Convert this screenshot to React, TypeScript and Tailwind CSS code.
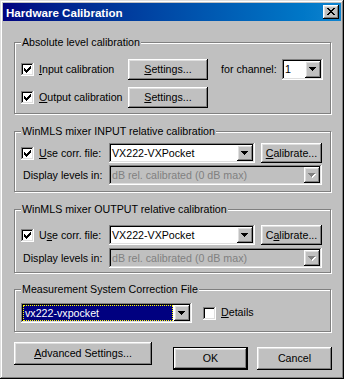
import React from 'react';

const F = "font-['Liberation_Sans',Arial,sans-serif]";
const RAISED =
  "bg-[#c0c0c0] shadow-[inset_-1px_-1px_0_#000,inset_1px_1px_0_#fff,inset_-2px_-2px_0_#808080,inset_2px_2px_0_#dfdfdf]";
const DEFAULT_BTN =
  "bg-[#c0c0c0] shadow-[inset_-1px_-1px_0_#000,inset_1px_1px_0_#000,inset_-2px_-2px_0_#000,inset_2px_2px_0_#fff,inset_-3px_-3px_0_#808080,inset_3px_3px_0_#dfdfdf]";
const SUNKEN =
  "shadow-[inset_-1px_-1px_0_#fff,inset_1px_1px_0_#808080,inset_-2px_-2px_0_#dfdfdf,inset_2px_2px_0_#000]";

type Layer = { rows: string[]; color: string; dx?: number; dy?: number };

function Pix({ w, h, layers }: { w: number; h: number; layers: Layer[] }) {
  const rects: React.ReactElement[] = [];
  layers.forEach((l, i) => {
    l.rows.forEach((r, y) => {
      r.split('').forEach((c, x) => {
        if (c === '#') {
          rects.push(
            <rect
              key={`${i}-${x}-${y}`}
              x={x + (l.dx ?? 0)}
              y={y + (l.dy ?? 0)}
              width="1"
              height="1"
              fill={l.color}
            />
          );
        }
      });
    });
  });
  return (
    <svg width={w} height={h} viewBox={`0 0 ${w} ${h}`} shapeRendering="crispEdges" className="block">
      {rects}
    </svg>
  );
}

const CHECK = ['......#', '.....##', '#...###', '##.###.', '#####..', '.###...', '..#....'];
const ARROW = ['#######', '.#####.', '..###..', '...#...'];
const XG = ['##....##', '.##..##.', '..####..', '...##...', '..####..', '.##..##.', '##....##'];

function U({ children }: { children: React.ReactNode }) {
  return <span className="underline decoration-1 underline-offset-[1px]">{children}</span>;
}

function Check({ checked, className = '' }: { checked?: boolean; className?: string }) {
  return (
    <div className={`w-[13px] h-[13px] shrink-0 bg-white ${SUNKEN} pl-[3px] pt-[3px] ${className}`}>
      {checked && <Pix w={7} h={7} layers={[{ rows: CHECK, color: '#000' }]} />}
    </div>
  );
}

function DropBtn({ disabled }: { disabled?: boolean }) {
  return (
    <div className={`w-[16px] h-full shrink-0 ${RAISED} pl-[4px] pt-[6px]`}>
      {disabled ? (
        <Pix
          w={8}
          h={5}
          layers={[
            { rows: ARROW, color: '#fff', dx: 1, dy: 1 },
            { rows: ARROW, color: '#808080' },
          ]}
        />
      ) : (
        <Pix w={7} h={4} layers={[{ rows: ARROW, color: '#000' }]} />
      )}
    </div>
  );
}

function Combo({
  className,
  text,
  disabled,
  selected,
}: {
  className: string;
  text: string;
  disabled?: boolean;
  selected?: boolean;
}) {
  return (
    <div className={`flex shrink-0 p-[2px] ${SUNKEN} ${disabled ? 'bg-[#c0c0c0]' : 'bg-white'} ${className}`}>
      {selected ? (
        <div className="flex-1 min-w-0 mr-[1px] flex items-center pl-[2px] bg-[#000080] text-white outline-1 outline-dotted outline-[#ffff00] -outline-offset-1 whitespace-nowrap overflow-hidden">
          {text}
        </div>
      ) : (
        <div
          className={`flex-1 min-w-0 flex items-center pl-[1px] whitespace-nowrap overflow-hidden ${
            disabled ? 'text-[#808080]' : 'text-black'
          }`}
        >
          {text}
        </div>
      )}
      <DropBtn disabled={disabled} />
    </div>
  );
}

function Btn({
  className,
  children,
  def,
}: {
  className: string;
  children: React.ReactNode;
  def?: boolean;
}) {
  return (
    <div className={`flex shrink-0 items-center justify-center whitespace-nowrap ${def ? DEFAULT_BTN : RAISED} ${className}`}>
      {children}
    </div>
  );
}

function Group({
  title,
  className,
  children,
}: {
  title: string;
  className: string;
  children: React.ReactNode;
}) {
  return (
    <div className={`relative w-[317px] border border-[#808080] shadow-[inset_1px_1px_0_#fff,1px_1px_0_#fff] ${className}`}>
      <span className="absolute left-[6px] top-[-7px] px-[1px] bg-[#c0c0c0] leading-[13px] whitespace-nowrap">
        {title}
      </span>
      {children}
    </div>
  );
}

export default function App() {
  return (
    <div
      className={`w-[344px] h-[379px] bg-[#c0c0c0] p-[3px] ${F} text-[10.667px] leading-[13px] text-black flex flex-col shadow-[inset_-1px_-1px_0_#000,inset_1px_1px_0_#dfdfdf,inset_-2px_-2px_0_#808080,inset_2px_2px_0_#fff]`}
    >
      {/* Title bar */}
      <div className="h-[18px] shrink-0 flex items-center bg-linear-to-r from-[#000080] to-[#1084d0] pl-[3px] pr-[2px]">
        <span className="flex-1 text-white font-bold text-[11.6px] whitespace-nowrap">Hardware Calibration</span>
        <div className={`w-[16px] h-[14px] ${RAISED} pl-[4px] pt-[3px]`}>
          <Pix w={8} h={7} layers={[{ rows: XG, color: '#000' }]} />
        </div>
      </div>

      <div className="flex flex-col pl-[11px]">
        {/* Group 1 */}
        <Group title="Absolute level calibration" className="mt-[21px]">
          <div className="flex flex-col pl-[6px] pt-[16px] pb-[5px] gap-[7px]">
            <div className="flex items-center h-[21px]">
              <div className="w-[107px] flex items-center">
                <Check checked />
                <span className="ml-[5px] whitespace-nowrap">
                  <U>I</U>nput calibration
                </span>
              </div>
              <Btn className="w-[80px] h-[21px]">
                <U>S</U>ettings...
              </Btn>
              <span className="ml-[13px] w-[61px] whitespace-nowrap">for channel:</span>
              <Combo className="w-[41px] h-[21px]" text="1" />
            </div>
            <div className="flex items-center h-[21px]">
              <div className="w-[107px] flex items-center">
                <Check checked />
                <span className="ml-[5px] whitespace-nowrap">
                  <U>O</U>utput calibration
                </span>
              </div>
              <Btn className="w-[80px] h-[21px]">
                <U>S</U>ettings...
              </Btn>
            </div>
          </div>
        </Group>

        {/* Group 2 */}
        <Group title="WinMLS mixer INPUT relative calibration" className="mt-[17px]">
          <div className="flex flex-col pl-[6px] pt-[11px] pb-[6px] gap-[2px]">
            <div className="flex items-center h-[20px]">
              <div className="w-[88px] flex items-center">
                <Check checked />
                <span className="ml-[5px] whitespace-nowrap">
                  <U>U</U>se corr. file:
                </span>
              </div>
              <Combo className="w-[146px] h-[20px]" text="VX222-VXPocket" />
              <Btn className="ml-[6px] w-[61px] h-[20px]">
                <U>C</U>alibrate...
              </Btn>
            </div>
            <div className="flex items-center h-[20px]">
              <span className="w-[88px] pl-[2px] whitespace-nowrap">Display levels in:</span>
              <Combo className="w-[213px] h-[20px]" text="dB rel. calibrated (0 dB max)" disabled />
            </div>
          </div>
        </Group>

        {/* Group 3 */}
        <Group title="WinMLS mixer OUTPUT relative calibration" className="mt-[17px]">
          <div className="flex flex-col pl-[6px] pt-[15px] pb-[4px] gap-[3px]">
            <div className="flex items-center h-[20px]">
              <div className="w-[88px] flex items-center">
                <Check checked />
                <span className="ml-[5px] whitespace-nowrap">
                  U<U>s</U>e corr. file:
                </span>
              </div>
              <Combo className="w-[146px] h-[20px]" text="VX222-VXPocket" />
              <Btn className="ml-[6px] w-[61px] h-[20px]">
                C<U>a</U>librate...
              </Btn>
            </div>
            <div className="flex items-center h-[20px]">
              <span className="w-[88px] pl-[2px] whitespace-nowrap">Display levels in:</span>
              <Combo className="w-[213px] h-[20px]" text="dB rel. calibrated (0 dB max)" disabled />
            </div>
          </div>
        </Group>

        {/* Group 4 */}
        <Group title="Measurement System Correction File" className="mt-[16px]">
          <div className="flex pl-[6px] pt-[13px] pb-[8px]">
            <div className="flex items-start h-[20px]">
              <Combo className="w-[171px] h-[20px]" text="vx222-vxpocket" selected />
              <Check className="ml-[11px] mt-[4px]" />
              <span className="ml-[5px] mt-[3px] whitespace-nowrap">
                <U>D</U>etails
              </span>
            </div>
          </div>
        </Group>

        {/* Bottom buttons */}
        <div className="flex items-start mt-[10px]">
          <Btn className="w-[138px] h-[23px]">
            <U>A</U>dvanced Settings...
          </Btn>
          <Btn className="ml-[21px] mt-[5px] w-[75px] h-[23px]" def>
            OK
          </Btn>
          <Btn className="ml-[9px] mt-[5px] w-[75px] h-[23px]">Cancel</Btn>
        </div>
      </div>
    </div>
  );
}
